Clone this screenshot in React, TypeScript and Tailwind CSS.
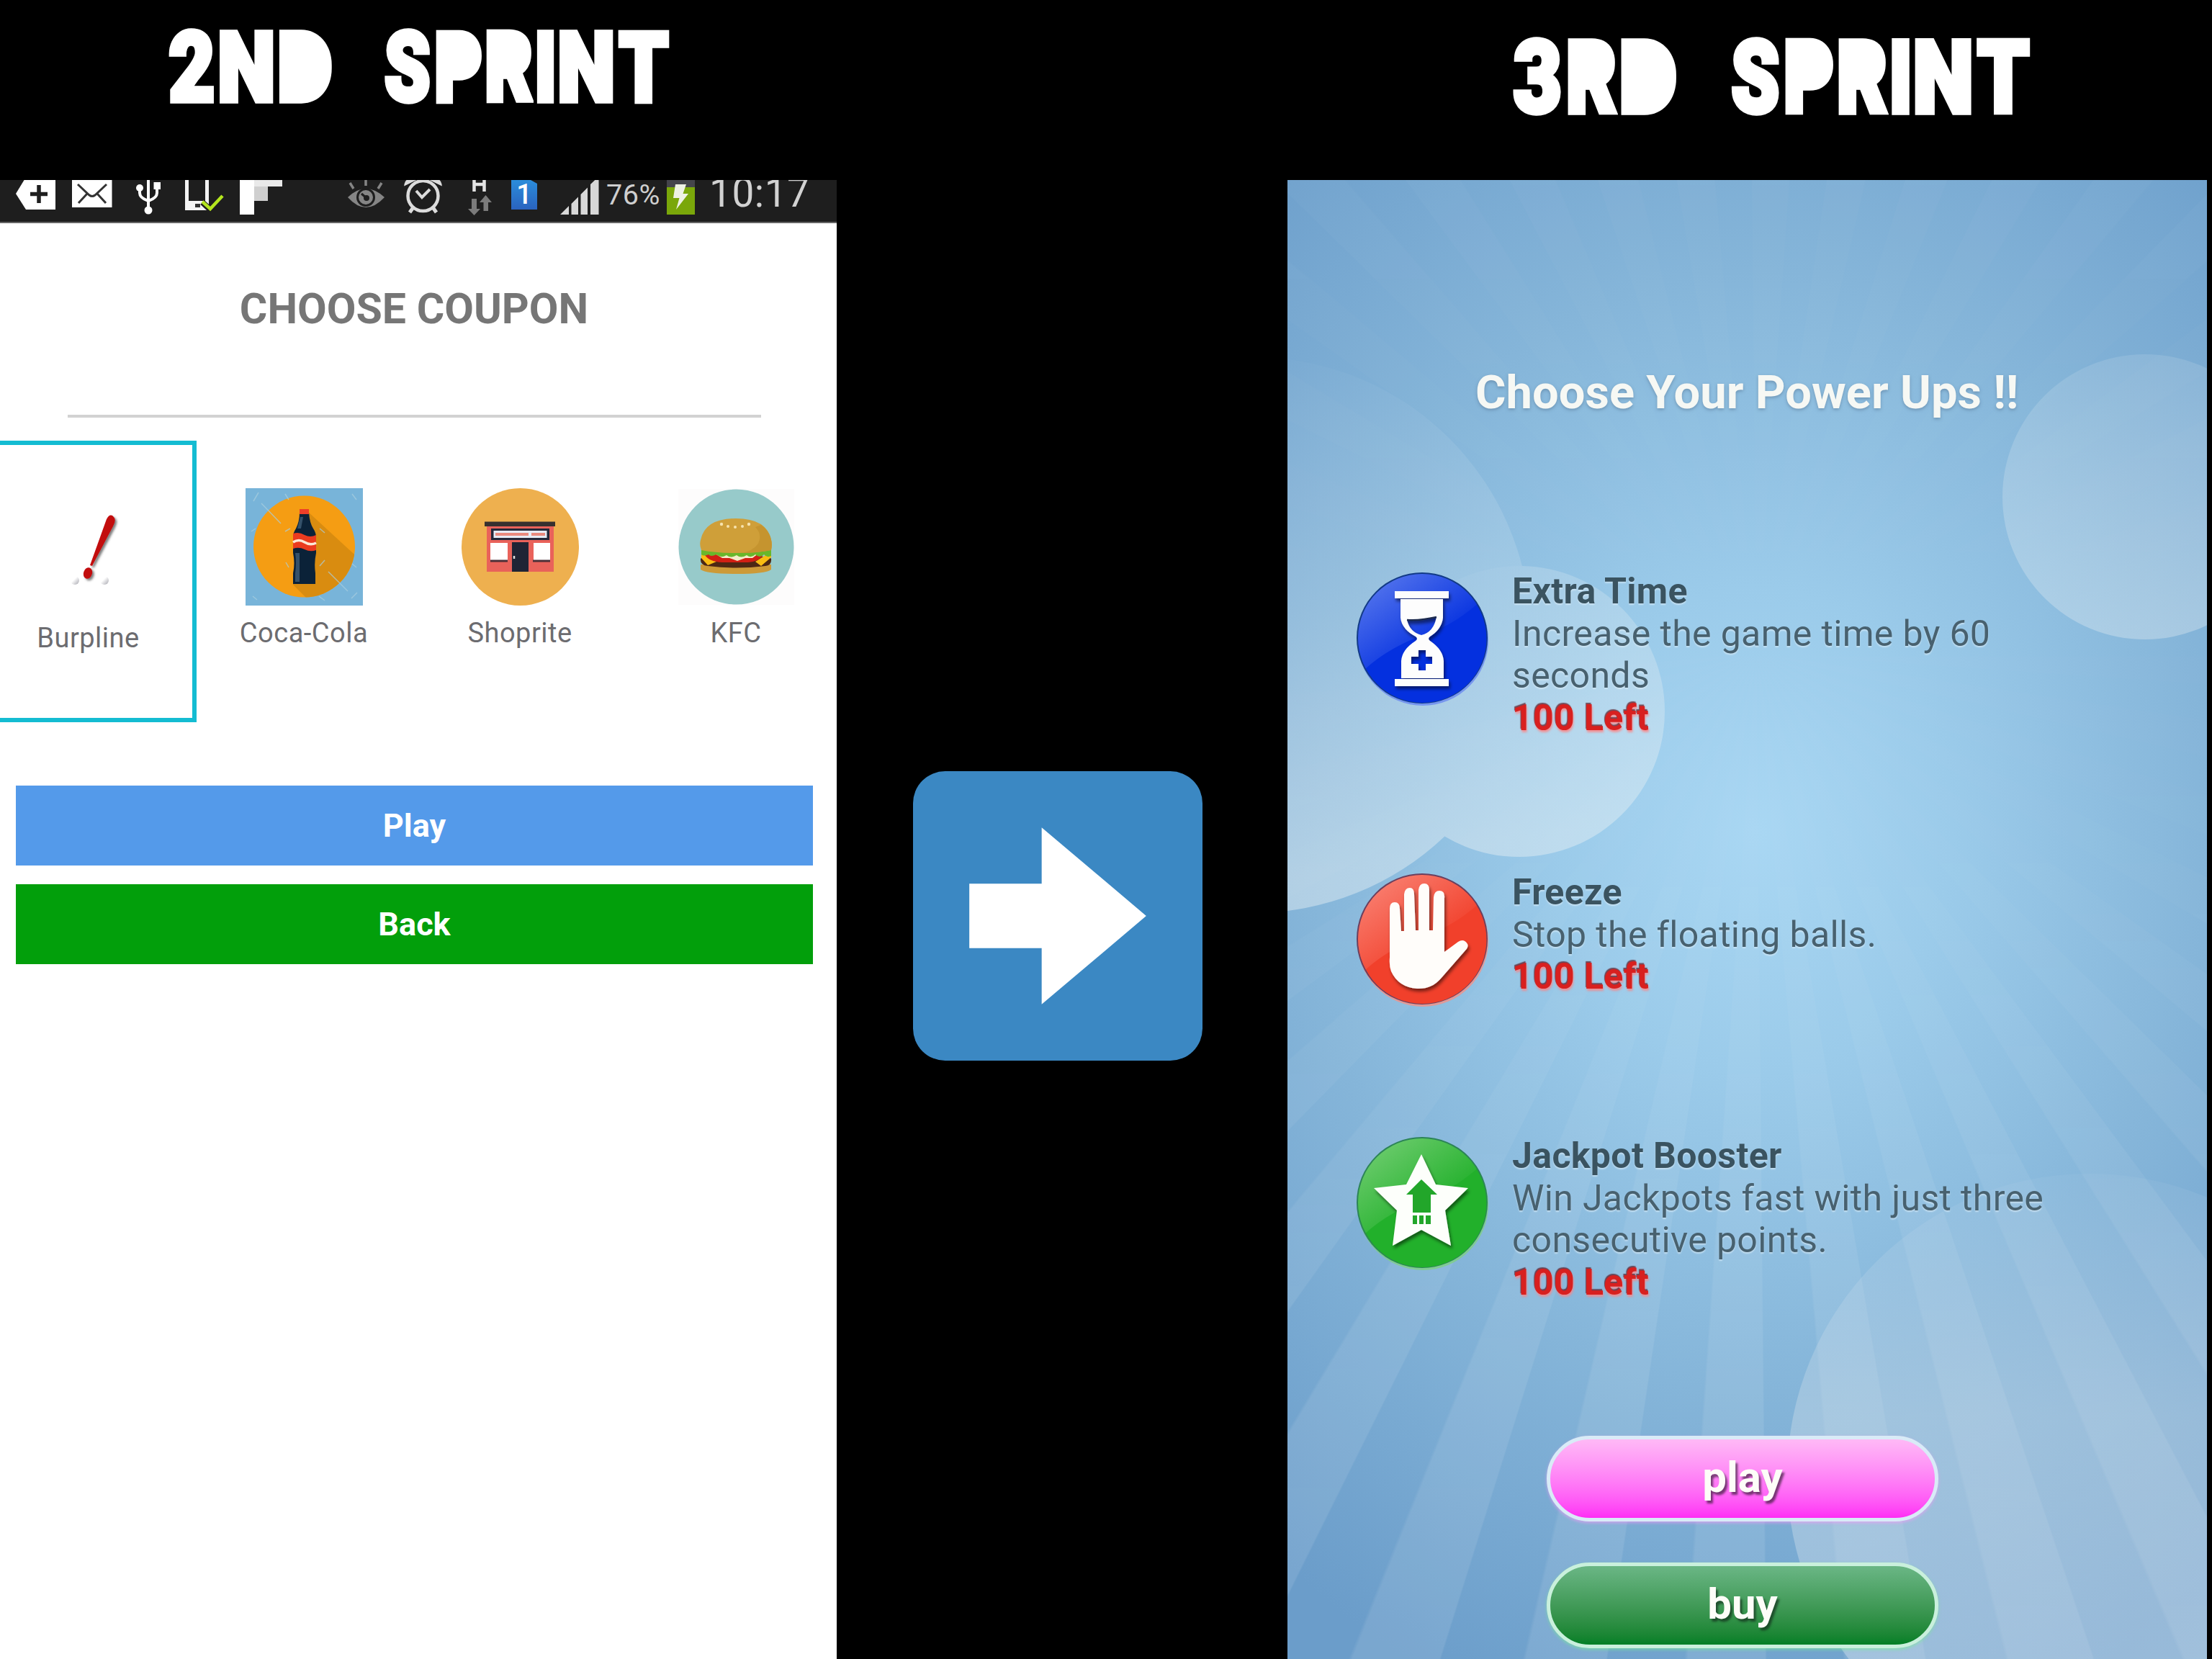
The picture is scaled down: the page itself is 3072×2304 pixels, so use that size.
import React from "react";

/* ---------- Headings ---------- */

type Glyph = { ch: string; box: string; scale: string; fill?: string };

const D_FILL = "left-[12%] top-[4%] w-[76%] h-[92%] rounded-r-[50%]";
const P_FILL = "left-[14%] top-[6%] w-[72%] h-[51%] rounded-r-[50%]";

const G: Record<string, Glyph> = {
  "2": { ch: "2", box: "w-[0.441em]", scale: "scale-x-[0.77]" },
  "3": { ch: "3", box: "w-[0.441em]", scale: "scale-x-[0.77]" },
  N: { ch: "N", box: "w-[0.524em]", scale: "scale-x-[0.80]" },
  D: { ch: "D", box: "w-[0.504em]", scale: "scale-x-[0.83]", fill: D_FILL },
  S: { ch: "S", box: "w-[0.444em]", scale: "scale-x-[0.71]" },
  P: { ch: "P", box: "w-[0.437em]", scale: "scale-x-[0.72]", fill: P_FILL },
  R: { ch: "R", box: "w-[0.451em]", scale: "scale-x-[0.72]", fill: P_FILL },
  I: { ch: "I", box: "w-[0.163em]", scale: "scale-x-[0.72]" },
  T: { ch: "T", box: "w-[0.490em]", scale: "scale-x-[0.76]" },
};

function Word({ text }: { text: string }) {
  return (
    <span className="flex gap-[0.05em]">
      {text.split("").map((c, i) => {
        const g = G[c];
        return (
          <span key={i} className={`relative flex h-[0.711em] items-center justify-center ${g.box}`}>
            <span className={`block scale-y-[0.93] leading-none [-webkit-text-stroke:0.055em_white] ${g.scale}`}>{g.ch}</span>
            {g.fill && <span className={`absolute bg-white ${g.fill}`} />}
          </span>
        );
      })}
    </span>
  );
}

/* ---------- Status bar ---------- */

function SIcon({ x, w, m, children }: { x: number; w: number; m: string; children: React.ReactNode }) {
  return (
    <svg className={`shrink-0 ${m}`} width={w} height={59} viewBox={`${x} 250 ${w} 59`} fill="none">
      {children}
    </svg>
  );
}

function StatusBar() {
  return (
    <div className="flex h-[60px] w-full overflow-hidden border-b-2 border-[#666] bg-[#1e1e1e]">
      <SIcon x={20} w={60} m="ml-[20px]">
        <path d="M22 269 L36 246 H77 V291 H36 Z" fill="#fff" />
        <path d="M54 257 V282 M42 269.500 H66" stroke="#1e1e1e" strokeWidth="5.500" />
      </SIcon>
      <SIcon x={100} w={56} m="ml-[20px]">
        <rect x="100" y="240" width="55.500" height="48" fill="#fff" />
        <path d="M108 256 L124 271 Q128 274 132 271 L148 256 M109 282 L121 269 M147 282 L135 269" stroke="#333" strokeWidth="3" />
      </SIcon>
      <SIcon x={186} w={40} m="ml-[30px]">
        <path d="M206 250 V292 M194 262 V268 Q194 275 206 279 M218 258 V268 Q218 275 206 279" stroke="#fff" strokeWidth="4" />
        <circle cx="206" cy="292" r="5.500" fill="#fff" />
        <circle cx="194" cy="261" r="5" fill="#fff" />
        <rect x="213.500" y="253" width="9.500" height="10" fill="#fff" />
      </SIcon>
      <SIcon x={254} w={60} m="ml-[28px]">
        <path d="M257 240 H290 V292 H257 Z" fill="#f4f4f4" />
        <rect x="262" y="240" width="23" height="39" fill="#1e1e1e" />
        <rect x="271" y="283" width="7" height="5" fill="#333" />
        <path d="M281 281 L292 291 L309 272" stroke="#1e1e1e" strokeWidth="8" />
        <path d="M281 280 L292 290 L309 272" stroke="#b4e61e" strokeWidth="4.500" />
      </SIcon>
      <SIcon x={332} w={62} m="ml-[18px]">
        <rect x="333" y="250" width="20" height="48" fill="#fff" />
        <rect x="353" y="250" width="39" height="9" fill="#e9e9e9" />
        <rect x="353" y="259" width="19" height="20" fill="#cfcfcf" />
      </SIcon>
      <SIcon x={482} w={54} m="ml-[88px]">
        <path d="M483 274 Q508 250 534 274 Q508 302 483 274 Z" fill="#858585" />
        <circle cx="508" cy="274" r="11.500" stroke="#1e1e1e" strokeWidth="3" />
        <circle cx="509" cy="275" r="4" fill="#1e1e1e" />
        <path d="M502 269 L509 275" stroke="#1e1e1e" strokeWidth="3" />
        <path d="M508 250 V258 M486 254 L491 262 M530 254 L525 262" stroke="#858585" strokeWidth="3.500" />
      </SIcon>
      <SIcon x={560} w={56} m="ml-[24px]">
        <circle cx="587.500" cy="272" r="21" stroke="#dcdcdc" strokeWidth="4.500" />
        <path d="M578 265 L586 274 L597 263" stroke="#dcdcdc" strokeWidth="4" />
        <path d="M574 288 L569 295 M601 288 L606 295" stroke="#dcdcdc" strokeWidth="5" />
        <path d="M563 256 Q564 248 577 249 Z M612 256 Q611 248 598 249 Z" fill="#dcdcdc" stroke="#dcdcdc" strokeWidth="3" />
      </SIcon>
      <SIcon x={648} w={38} m="ml-[32px]">
        <path d="M658.500 244 V266 M672.500 244 V266 M658 256 H673" stroke="#e4e4e4" strokeWidth="4.500" />
        <path d="M655 276 H662 V290 H667 L658.500 299 L650 290 H655 Z M671.500 293 H678 V281 H683 L674.500 271 L666 281 H671.500 Z" fill="#7b7b7b" />
      </SIcon>
      <div className="ml-[24px] flex h-[41px] w-[36px] shrink-0 items-center justify-center bg-linear-to-b from-[#2b8ddb] to-[#2a63bf] [clip-path:polygon(0_0,75%_0,100%_12%,100%_100%,0_100%)]">
        <span className="text-[38px] leading-[41px] font-medium text-white">1</span>
      </div>
      <SIcon x={778} w={56} m="ml-[32px]">
        <path d="M778 298 L790 286 V298 Z M793.500 298 V283 L803 273.500 V298 Z M806.500 298 V270 L816 260.500 V298 Z M820 298 V256 L831.500 245 V298 Z" fill="#d8d8d8" />
      </SIcon>
      <span className="ml-[8px] w-[84px] shrink-0 text-[39.500px] leading-[41px] tracking-[0.5px] whitespace-nowrap text-[#cfcfcf]">76%</span>
      <SIcon x={926} w={40} m="ml-0">
        <rect x="926" y="250" width="39" height="48" fill="#45454b" />
        <rect x="926" y="260" width="39" height="38" fill="#7aa70a" />
        <path d="M938 256 H953 L948.500 269 H956 L939 291 L943.500 275 H935 Z" fill="#eef2e4" />
      </SIcon>
      <span className="-mt-[7px] ml-[19px] shrink-0 text-[55px] leading-[50px] tracking-[0.5px] text-[#d2d2d2]">10:17</span>
    </div>
  );
}

/* ---------- Coupon pictures ---------- */

function BurplineArt() {
  return (
    <svg className="block" width="163" height="163" viewBox="0 0 163 163">
      <defs>
        <linearGradient id="ball" x1="0" y1="0" x2="1" y2="1">
          <stop offset=".4" stopColor="#fff" />
          <stop offset="1" stopColor="#a5a5ad" />
        </linearGradient>
        <filter id="soft" x="-30%" y="-30%" width="160%" height="160%">
          <feDropShadow dx="2.500" dy="2.500" stdDeviation="1.500" floodColor="#444" floodOpacity=".7" />
        </filter>
      </defs>
      <circle cx="63" cy="122" r="6" fill="url(#ball)" />
      <circle cx="104" cy="122" r="6" fill="url(#ball)" />
      <g fill="#c20a10" filter="url(#soft)">
        <path d="M107 37 Q112 28 117 34 Q121 38 116 47 L87 102 L84 101 Z" />
        <ellipse cx="81" cy="112" rx="6" ry="8" transform="rotate(18 81 112)" />
      </g>
    </svg>
  );
}

function ColaArt() {
  return (
    <svg className="block" width="163" height="163" viewBox="0 0 163 163">
      <defs>
        <clipPath id="colaDisc"><circle cx="81.500" cy="81" r="70.500" /></clipPath>
      </defs>
      <rect width="163" height="163" fill="#78b4d9" />
      <circle cx="81.500" cy="81" r="70.500" fill="#f59d13" />
      <path d="M87 33 L163 103 V163 H95 L66 134 Z" fill="#d98c10" clipPath="url(#colaDisc)" />
      <g stroke="#a9cfdf" strokeWidth="1.500" opacity=".7">
        <path d="M22 21 L49 49 M115 116 L142 143 M11 18 L18 6 M55 8 L60 16 M148 8 L154 16 M147 153 L155 145 M10 150 L16 155 M8 60 L14 56 M148 105 L154 110 M102 150 L110 156 M55 60 L62 56 M103 56 L110 62 M103 108 L110 100 M56 103 L60 110" />
      </g>
      <path d="M75 34 H88 Q89 48 94 56 Q98 62 98 68 V90 Q95 104 97 118 V133 H66 V118 Q69 104 66 90 V68 Q66 62 70 56 Q75 46 75 34 Z" fill="#0b2238" />
      <path d="M69 90 Q71 104 69 118 V130 H75 V90 Z M76 40 H80 L77 56 H72 Z" fill="#34516a" />
      <rect x="75" y="29" width="13" height="7" fill="#ee3f28" />
      <path d="M66 63 Q74 60 82 65 Q90 69 98 65 V86 Q90 89 82 85 Q74 81 66 84 Z" fill="#ea3b1f" />
      <path d="M66 75 Q74 70 82 75 Q90 80 98 76" stroke="#fbe9d6" strokeWidth="3.500" fill="none" />
    </svg>
  );
}

function ShopArt() {
  return (
    <svg className="block" width="163" height="163" viewBox="0 0 163 163">
      <circle cx="81.500" cy="81.500" r="81.500" fill="#eeb04f" />
      <rect x="35" y="52" width="93" height="64" fill="#e9625a" />
      <rect x="32" y="46.500" width="98" height="6.500" fill="#37302f" />
      <rect x="41" y="56" width="81" height="16" fill="#24283a" />
      <rect x="44.500" y="59" width="74" height="10" fill="#e6ebf5" />
      <path d="M47 64 H93 M97 64 H116" stroke="#e98a7e" strokeWidth="4" />
      <rect x="40" y="76" width="24" height="24" fill="#fff" />
      <rect x="100" y="76" width="23" height="24" fill="#fff" />
      <path d="M40 101 H64 M99 101 H123" stroke="#4d3038" strokeWidth="3" />
      <rect x="70" y="75" width="23" height="41" fill="#1f2435" />
      <path d="M73 94 V98" stroke="#ddd" strokeWidth="2.500" />
    </svg>
  );
}

function BurgerArt() {
  return (
    <svg className="block" width="163" height="163" viewBox="0 0 163 163">
      <rect x="1" y="1" width="161" height="161" fill="#fdfcfc" />
      <circle cx="81.500" cy="81.500" r="80" fill="#97caca" />
      <path d="M32 106 H130 V113 Q122 119 81 119 Q40 119 32 113 Z" fill="#cd9a38" />
      <path d="M32 98 Q34 93 81 95 Q128 93 130 98 Q131 107 122 108 Q81 113 42 108 Q31 107 32 98 Z" fill="#4d2814" />
      <path d="M33 88 L54 102 L42 107 L33 97 Z M130 88 L108 102 L116 108 L130 96 Z" fill="#f9bd12" />
      <path d="M42 91 H120 Q114 102 98 103 H62 Q44 102 38 93 Z" fill="#d21f14" />
      <path d="M52 91 H112 L104 97 H94 L83 101 L72 97 H62 Z" fill="#f3ecc8" />
      <path d="M33 85 H130 V94 Q124 97 120 92 Q114 98 108 92 Q102 98 96 93 Q88 98 82 93 Q74 98 68 93 Q60 98 54 92 Q46 96 43 92 Q36 95 33 92 Z" fill="#69b72b" />
      <path d="M33 86 Q30 78 32 72 Q38 42 81 42 Q124 42 130 72 Q132 78 130 86 Q110 90 81 90 Q52 90 33 86 Z" fill="#cf9f39" />
      <path d="M108 54 Q118 64 112 77 Q104 88 88 90 Q112 90 130 86 Q134 64 116 51 Z" fill="#c5942f" />
      <g fill="#f7e3ae">
        <circle cx="61" cy="50" r="2.200" /><circle cx="70" cy="53" r="2" /><circle cx="80" cy="54" r="2" />
        <circle cx="90" cy="53" r="2" /><circle cx="99" cy="50" r="2.200" />
      </g>
    </svg>
  );
}

function Coupon({ art, name }: { art: React.ReactNode; name: string }) {
  return (
    <div className="flex w-[300px] flex-col items-center pt-[66px]">
      {art}
      <span className="mt-[15px] text-[38px] leading-[46px] tracking-[0.5px] text-[#6c6c70]">{name}</span>
    </div>
  );
}

/* ---------- Power-up badges ---------- */

function Badge({ id, base, light, rim, children }: { id: string; base: string; light: string; rim: string; children: React.ReactNode }) {
  return (
    <svg className="block shrink-0" width="190" height="190" viewBox="0 0 190 190">
      <defs>
        <linearGradient id={`${id}g`} x1="0" y1="0" x2=".7" y2=".7">
          <stop offset="0" stopColor={light} />
          <stop offset="1" stopColor={base} />
        </linearGradient>
        <filter id={`${id}s`} x="-20%" y="-20%" width="150%" height="150%">
          <feDropShadow dx="2" dy="4" stdDeviation="2" floodColor="#000" floodOpacity=".5" />
        </filter>
        <clipPath id={`${id}c`}><circle cx="95" cy="94" r="89" /></clipPath>
      </defs>
      <circle cx="96" cy="97" r="91" fill={light} opacity=".75" />
      <circle cx="95" cy="94" r="91" fill={rim} />
      <circle cx="95.500" cy="95" r="89" fill={base} />
      <path d="M0 0 H190 V30 Q150 70 110 85 Q50 105 15 138 H0 Z" fill={`url(#${id}g)`} clipPath={`url(#${id}c)`} />
      <g filter={`url(#${id}s)`}>{children}</g>
    </svg>
  );
}

const timeBadge = (
  <Badge id="time" base="#0430df" light="#6583f0" rim="#123a86">
    <rect x="57" y="29" width="75" height="10" fill="#fdfdfd" />
    <rect x="57" y="151" width="75" height="10" fill="#fdfdfd" />
    <path fillRule="evenodd" fill="#fdfdfd" d="M65 40 H124 V66 Q122 82 106 92 Q102 95 106 98 Q124 110 125 126 V150 H66 V126 Q67 110 86 98 Q90 95 86 92 Q67 82 65 66 Z M74 69 Q78 86 94 90 Q111 86 115 65 Q105 67 98 68 Q84 70 74 69 Z M90 111 V120 H80 V130 H90 V139 H100 V130 H109 V120 H100 V111 Z" />
    <path d="M74 69 Q84 70 98 68 Q105 67 115 65" stroke="#1c2c50" strokeWidth="2.500" fill="none" />
  </Badge>
);

const handBadge = (
  <Badge id="hand" base="#f1402b" light="#fb8d80" rim="#6a3f5e">
    <path
      fill="#fffdfa"
      d="M50 52 Q50 43 57 43 Q64 43 64 52 L66 83 H70 V32 Q71 23 78 23 Q84 23 84 32 L86 82 H90 V26 Q91 17 98 17 Q105 17 105 26 V82 H110 L111 36 Q112 27 119 27 Q127 27 126 37 V112 L145 98 Q153 93 158 101 Q160 105 155 110 L121 149 Q108 164 88 163 Q62 161 52 139 Q49 131 50 120 Z"
    />
  </Badge>
);

const starBadge = (
  <Badge id="star" base="#22b02b" light="#7dd27c" rim="#2c8457">
    <path fill="#fdfffb" d="M94 27 L114 69 L159 74 L127 105 L135 154 L94 132 L54 154 L60 105 L28 74 L73 69 Z" />
    <path fill="#21a62b" d="M94 62 L116 83 H107 V108 H82 V83 H73 Z M82 112 H88 V124 H82 Z M91 112 H97 V124 H91 Z M100 112 H107 V124 H100 Z" />
  </Badge>
);

function PowerUp({ badge, title, lines, box }: { badge: React.ReactNode; title: string; lines: string[]; box: string }) {
  return (
    <div className={`flex ${box}`}>
      {badge}
      <div className="ml-[30px] text-[50px] leading-[58.6px] tracking-[0.35px] text-[#48616f] [text-shadow:0_2px_2px_rgba(225,240,250,0.6)]">
        <div className="font-bold text-[#3a5360]">{title}</div>
        {lines.map((l) => (
          <div key={l} className="whitespace-nowrap">{l}</div>
        ))}
        <div className="font-bold text-[#d8201f] [text-shadow:-1px_-2px_1px_rgba(90,15,25,0.7),1px_3px_3px_rgba(255,130,130,0.8)]">100 Left</div>
      </div>
    </div>
  );
}

export default function App() {
  return (
    <div className="flex h-[2304px] w-[3072px] overflow-hidden bg-black font-[Roboto,sans-serif]">
      {/* Second sprint screen */}
      <section className="flex w-[1162px] shrink-0 flex-col">
        <h1 className="flex h-[250px] gap-[0.524em] pt-[44px] pl-[235px] text-[143px] font-black text-white">
          <Word text="2ND" />
          <Word text="SPRINT" />
        </h1>
        <StatusBar />
        <div className="flex-1 bg-white">
          <h2 className="pt-[84px] pr-[12px] text-center text-[59px] leading-[70px] font-bold text-[#767676]">CHOOSE COUPON</h2>
          <div className="mt-[112px] ml-[94px] h-[4px] w-[963px] bg-[#d2d2d2]" />
          <div className="mt-[32px] flex h-[391px]">
            <div className="flex w-[273px] shrink-0 flex-col items-center border-y-[6px] border-r-[6px] border-[#14bcd2] pt-[66px] pr-[22px]">
              <BurplineArt />
              <span className="mt-[16px] text-[38px] leading-[46px] tracking-[0.5px] text-[#6c6c70]">Burpline</span>
            </div>
            <div className="-ml-[1px] flex">
              <Coupon art={<ColaArt />} name="Coca-Cola" />
              <Coupon art={<ShopArt />} name="Shoprite" />
              <Coupon art={<BurgerArt />} name="KFC" />
            </div>
          </div>
          <div className="mt-[88px] ml-[22px] flex w-[1107px] flex-col gap-[26px] text-[45px] font-bold text-white">
            <button className="h-[111px] bg-[#549aea]">Play</button>
            <button className="h-[111px] bg-[#029f0b]">Back</button>
          </div>
        </div>
      </section>

      {/* Transition arrow */}
      <section className="flex w-[626px] shrink-0 justify-start pt-[1071px] pl-[106px]">
        <svg width="402" height="402" viewBox="0 0 36 36">
          <rect width="36" height="36" rx="4" fill="#3b88c3" />
          <path d="M29 18 L16 29 V22 H7 V14 H16 V7 Z" fill="#fff" />
        </svg>
      </section>

      {/* Third sprint screen */}
      <section className="flex w-[1277px] shrink-0 flex-col">
        <h1 className="flex h-[250px] gap-[0.524em] pt-[56px] pl-[314px] text-[150px] font-black text-white">
          <Word text="3RD" />
          <Word text="SPRINT" />
        </h1>
        <div className="relative isolate flex-1 overflow-hidden bg-[radial-gradient(ellipse_1050px_1300px_at_51%_44%,#a9d7f3_0%,#9bcbea_26%,#85b5d9_60%,#6b9dca_100%)]">
          {/* Rays and clouds behind the content */}
          <div className="absolute inset-0 -z-10 bg-[repeating-conic-gradient(from_-0.500deg_at_51%_32%,rgba(255,255,255,0.1)_0deg_4.400deg,rgba(255,255,255,0)_4.600deg_8.900deg,rgba(255,255,255,0.1)_9deg)] [mask-image:linear-gradient(to_bottom,rgba(0,0,0,0.25)_0%,rgba(0,0,0,0.08)_28%,rgba(0,0,0,0.15)_45%,rgba(0,0,0,0.9)_80%,black_100%)]" />
          <svg className="absolute inset-0 -z-10" width="1277" height="2054" viewBox="1788 250 1277 2054">
            <defs>
              <linearGradient id="cloud" gradientUnits="userSpaceOnUse" x1="1900" y1="480" x2="2020" y2="1180">
                <stop offset="0" stopColor="#e6eff3" stopOpacity=".02" />
                <stop offset=".5" stopColor="#e6eff3" stopOpacity=".19" />
                <stop offset="1" stopColor="#e6eff3" stopOpacity=".46" />
              </linearGradient>
              <linearGradient id="puffTop" x1="0" y1="0" x2="0" y2="1">
                <stop offset="0" stopColor="#e6eef2" stopOpacity=".06" />
                <stop offset=".45" stopColor="#e6eef2" stopOpacity="0" />
              </linearGradient>
              <linearGradient id="cloud2" x1="0" y1="0" x2="0" y2="1">
                <stop offset="0" stopColor="#e6eef2" stopOpacity=".14" />
                <stop offset="1" stopColor="#e6eef2" stopOpacity=".36" />
              </linearGradient>
              <linearGradient id="cloud3" x1="0" y1="0" x2="0" y2="1">
                <stop offset="0" stopColor="#d2e0ee" stopOpacity=".06" />
                <stop offset=".4" stopColor="#d2e0ea" stopOpacity=".38" />
                <stop offset="1" stopColor="#d2e0ee" stopOpacity=".46" />
              </linearGradient>
              <clipPath id="bank">
                <circle cx="1740" cy="882" r="386" />
                <circle cx="2110" cy="988" r="202" />
              </clipPath>
            </defs>
            <rect x="1788" y="450" width="600" height="850" fill="url(#cloud)" clipPath="url(#bank)" />
            <circle cx="2110" cy="988" r="202" fill="url(#puffTop)" />
            <circle cx="2979" cy="690" r="198" fill="url(#cloud2)" />
            <circle cx="2902" cy="2050" r="420" fill="url(#cloud3)" />
          </svg>

          <h2 className="pt-[257px] pl-[261px] text-[65px] leading-[76px] font-bold tracking-[0.05px] whitespace-nowrap text-[#f6f8f4] [text-shadow:0_2px_4px_rgba(80,110,140,0.5)]">
            Choose Your Power Ups !!
          </h2>
          <div className="mt-[209px] ml-[92px] flex flex-col">
            <PowerUp badge={timeBadge} title="Extra Time" lines={["Increase the game time by 60", "seconds"]} box="h-[418px]" />
            <PowerUp badge={handBadge} title="Freeze" lines={["Stop the floating balls."]} box="h-[366px]" />
            <PowerUp badge={starBadge} title="Jackpot Booster" lines={["Win Jackpots fast with just three", "consecutive points."]} box="h-[418px]" />
          </div>
          <div className="ml-[360px] flex w-[544px] flex-col gap-[57px] text-[60px] leading-none font-bold text-[#fdfdf8]">
            <button className="h-[119px] rounded-full border-[5px] border-[#d9ebf7] bg-linear-to-b from-[#ffb9f6] to-[#ff2bf5] pb-[4px] shadow-[0_2px_4px_rgba(255,150,250,0.6)] [text-shadow:3px_4px_3px_rgba(60,30,60,0.7)]">play</button>
            <button className="h-[119px] rounded-full border-[5px] border-[#c9f0dc] bg-linear-to-b from-[#6ab685] to-[#017f26] pb-[4px] shadow-[0_2px_4px_rgba(120,240,150,0.6)] [text-shadow:3px_4px_3px_rgba(20,50,30,0.7)]">buy</button>
          </div>
        </div>
      </section>
    </div>
  );
}
